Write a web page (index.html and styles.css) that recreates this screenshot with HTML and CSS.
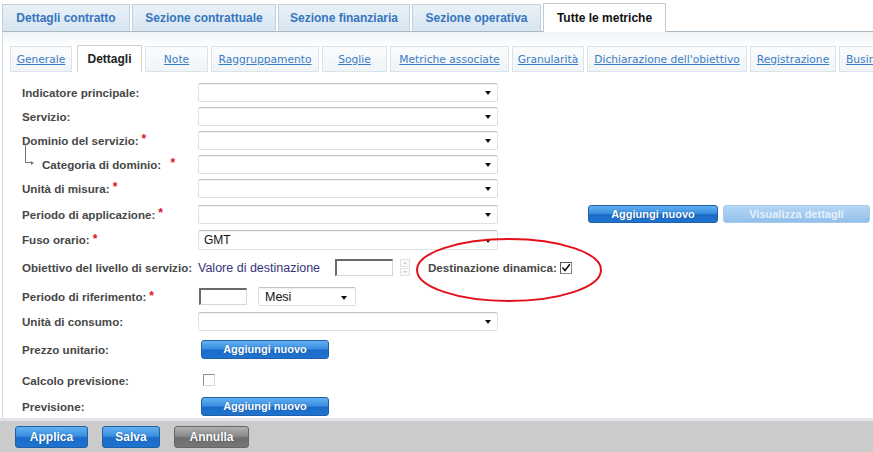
FILE: index.html
```html
<!DOCTYPE html>
<html lang="it">
<head>
<meta charset="utf-8">
<title>Tutte le metriche</title>
<link rel="stylesheet" href="styles.css">
</head>
<body>
<div class="page">
  <div class="tabs">
    <div class="tab tab-w1">Dettagli contratto</div>
    <div class="tab tab-w2">Sezione contrattuale</div>
    <div class="tab tab-w3">Sezione finanziaria</div>
    <div class="tab tab-w4">Sezione operativa</div>
    <div class="tab tab-active tab-w5">Tutte le metriche</div>
  </div>
  <div class="panel">
    <div class="subtabs">
      <a class="subtab st-gen">Generale</a>
      <span class="subtab subtab-active st-det">Dettagli</span>
      <a class="subtab st-note">Note</a>
      <a class="subtab st-rag">Raggruppamento</a>
      <a class="subtab st-sog">Soglie</a>
      <a class="subtab st-met">Metriche associate</a>
      <a class="subtab st-gra">Granularità</a>
      <a class="subtab st-dic">Dichiarazione dell'obiettivo</a>
      <a class="subtab st-reg">Registrazione</a>
      <a class="subtab st-bus">Busin</a>
    </div>
    <div class="form">
      <div class="row h24">
        <div class="label">Indicatore principale:</div>
        <div class="select"><span class="arrow"></span></div>
      </div>
      <div class="row h24">
        <div class="label">Servizio:</div>
        <div class="select"><span class="arrow"></span></div>
      </div>
      <div class="row h24">
        <div class="label">Dominio del servizio: <span class="req">*</span></div>
        <div class="select"><span class="arrow"></span></div>
      </div>
      <div class="row h24">
        <div class="label label-child"><span class="tree"></span>Categoria di dominio: &nbsp;<span class="req">*</span></div>
        <div class="select"><span class="arrow"></span></div>
      </div>
      <div class="row h24">
        <div class="label">Unità di misura: <span class="req">*</span></div>
        <div class="select"><span class="arrow"></span></div>
      </div>
      <div class="row h28">
        <div class="label">Periodo di applicazione: <span class="req">*</span></div>
        <div class="select"><span class="arrow"></span></div>
        <div class="btn btn-blue btn-add-top">Aggiungi nuovo</div>
        <div class="btn btn-disabled">Visualizza dettagli</div>
      </div>
      <div class="row h23">
        <div class="label">Fuso orario: <span class="req">*</span></div>
        <div class="select select-tall"><span class="value">GMT</span><span class="arrow"></span></div>
      </div>
      <div class="row h33">
        <div class="label">Obiettivo del livello di servizio:</div>
        <div class="target-text">Valore di destinazione</div>
        <div class="input input-target"></div>
        <div class="spinner"><span class="spin spin-up"></span><span class="spin spin-down"></span></div>
        <div class="dyn-label">Destinazione dinamica:</div>
        <div class="checkbox checked"><svg viewBox="0 0 10 10" width="10" height="10"><path d="M1.5 4.5 L4 7.5 L8.8 1.2" fill="none" stroke="#111" stroke-width="1.6"/></svg></div>
      </div>
      <div class="row h25">
        <div class="label">Periodo di riferimento: <span class="req">*</span></div>
        <div class="input input-period"></div>
        <div class="select select-small"><span class="value">Mesi</span><span class="arrow"></span></div>
      </div>
      <div class="row h24">
        <div class="label">Unità di consumo:</div>
        <div class="select"><span class="arrow"></span></div>
      </div>
      <div class="row h32">
        <div class="label">Prezzo unitario:</div>
        <div class="btn btn-blue btn-add">Aggiungi nuovo</div>
      </div>
      <div class="row h30">
        <div class="label">Calcolo previsione:</div>
        <div class="checkbox plain"></div>
      </div>
      <div class="row h22">
        <div class="label">Previsione:</div>
        <div class="btn btn-blue btn-add">Aggiungi nuovo</div>
      </div>
    </div>
  </div>
  <div class="footer">
    <div class="btn btn-blue btn-foot btn-applica">Applica</div>
    <div class="btn btn-blue btn-foot btn-salva">Salva</div>
    <div class="btn btn-gray btn-foot btn-annulla">Annulla</div>
  </div>
  <svg class="annot" width="873" height="452" viewBox="0 0 873 452">
    <ellipse cx="509" cy="270" rx="92" ry="31" fill="none" stroke="#e3101b" stroke-width="2"/>
  </svg>
</div>
</body>
</html>
```

FILE: styles.css
```css
* { box-sizing: border-box; }
html, body { margin: 0; padding: 0; background: #fff; }
.page {
  position: relative;
  width: 873px;
  height: 452px;
  overflow: hidden;
  font-family: "Liberation Sans", Arial, sans-serif;
  background: #fff;
}

/* top tabs */
.tabs {
  display: flex;
  align-items: flex-end;
  gap: 2px;
  height: 31px;
  padding-left: 2px;
  position: relative;
  z-index: 2;
}
.tab {
  height: 27px;
  display: flex;
  align-items: center;
  justify-content: center;
  font-size: 12px;
  font-weight: bold;
  color: #3675bf;
  background: linear-gradient(#e9f1f7, #d6e5f0);
  border: 1px solid #bed2e1;
  border-bottom: none;
}
.tab-active {
  height: 29px;
  margin-bottom: -1px;
  background: #fff;
  color: #111;
  border-color: #c3cbd2;
}
.tab-w1 { width: 128px; }
.tab-w2 { width: 144px; }
.tab-w3 { width: 132px; }
.tab-w4 { width: 129px; }
.tab-w5 { width: 123px; }

/* panel */
.panel {
  height: 387px;
  margin-left: 2px;
  border-top: 1px solid #aab8c4;
  border-left: 1px solid #d3dbe2;
  background: linear-gradient(#eef3f7, #fff 14px);
  overflow: hidden;
}
.subtabs {
  display: flex;
  align-items: flex-end;
  gap: 3px;
  height: 40px;
  padding-left: 7px;
  white-space: nowrap;
}
.subtab {
  flex: none;
  height: 26px;
  display: flex;
  align-items: center;
  justify-content: center;
  font-family: "DejaVu Sans", Verdana, sans-serif;
  font-size: 10.7px;
  color: #3b7cc6;
  text-decoration: underline;
  background: linear-gradient(#fbfcfd, #f0f4f7);
  border: 1px solid #dae3ea;
}
.subtab-active {
  height: 27px;
  background: #fff;
  border-color: #cfcfcf;
  border-bottom: none;
  color: #222;
  font-weight: bold;
  text-decoration: none;
  font-family: "Liberation Sans", Arial, sans-serif;
  font-size: 12px;
}
.st-gen { width: 62px; margin-right: 2px; }
.st-det { width: 65px; }
.st-note { width: 63px; }
.st-rag { width: 108px; }
.st-sog { width: 65px; }
.st-met { width: 119px; }
.st-gra { width: 72px; }
.st-dic { width: 160px; }
.st-reg { width: 86px; }
.st-bus { width: 50px; justify-content: flex-start; padding-left: 6px; }

/* form */
.form {
  padding: 8px 0 0 19px;
}
.row {
  display: flex;
  align-items: center;
}
.h22 { height: 22px; }
.h23 { height: 23px; }
.h24 { height: 24px; }
.h25 { height: 25px; }
.h28 { height: 28px; }
.h30 { height: 30px; }
.h32 { height: 32px; }
.h33 { height: 33px; }
.label {
  flex: none;
  width: 176px;
  font-size: 11.6px;
  font-weight: bold;
  color: #474747;
  white-space: nowrap;
  display: flex;
  align-items: center;
}
.req { color: #e0101e; font-size: 12px; margin-left: 3px; margin-top: -2px; }
.label-child { position: relative; padding-left: 20px; }
.tree {
  position: absolute;
  left: 3px;
  top: -14px;
  width: 6px;
  height: 19px;
  border-left: 1px solid #777;
  border-bottom: 1px solid #777;
}
.tree::after {
  content: "";
  position: absolute;
  right: -3px;
  bottom: -3px;
  border-left: 3px solid #777;
  border-top: 2.5px solid transparent;
  border-bottom: 2.5px solid transparent;
}

.select {
  position: relative;
  width: 300px;
  height: 19px;
  border: 1px solid #e0e0e0;
  border-top-color: #c2c2c2;
  border-radius: 2px;
  background: #fff;
  box-shadow: inset 0 1px 1px rgba(0,0,0,0.06);
  display: flex;
  align-items: center;
}
.select-tall { height: 20px; }
.value {
  font-size: 12px;
  color: #111;
  padding-left: 5px;
}
.arrow {
  position: absolute;
  right: 6px;
  top: 50%;
  margin-top: -1px;
  width: 0;
  height: 0;
  border-top: 4px solid #111;
  border-left: 3.5px solid transparent;
  border-right: 3.5px solid transparent;
}
.select-small {
  width: 98px;
  height: 19px;
  margin-left: 11px;
}
.select-small .value { padding-left: 6px; font-size: 12.5px; }
.select-small .arrow { right: 8px; }

.input {
  height: 17px;
  background: #fff;
  border: 1px solid #d6d6d6;
  border-top: 2px solid #6a6a6a;
  border-left: 2px solid #6a6a6a;
}
.input-target { width: 58px; }
.input-period { width: 48px; margin-left: 1px; }

.target-text {
  width: 137px;
  font-size: 12.5px;
  color: #35357a;
  white-space: nowrap;
}
.spinner {
  display: flex;
  flex-direction: column;
  gap: 1px;
  margin-left: 7px;
}
.spin {
  position: relative;
  width: 10px;
  height: 8px;
  border: 1px solid #e2e2e2;
  background: #fafafa;
}
.spin::after {
  content: "";
  position: absolute;
  left: 2px;
  top: 2px;
  border-left: 2px solid transparent;
  border-right: 2px solid transparent;
}
.spin-up::after { border-bottom: 2px solid #c9c9c9; }
.spin-down::after { border-top: 2px solid #c9c9c9; }

.dyn-label {
  margin-left: 18px;
  font-size: 11.6px;
  font-weight: bold;
  color: #474747;
  white-space: nowrap;
}
.checkbox {
  width: 12px;
  height: 12px;
  background: #fff;
  display: flex;
  align-items: center;
  justify-content: center;
}
.checkbox.checked {
  margin-left: 3px;
  border: 1px solid #8a8a8a;
  border-top-color: #555;
  border-left-color: #555;
}
.checkbox.plain {
  margin-left: 5px;
  border: 1px solid #d8d8d8;
  border-top-color: #8f8f8f;
  border-left-color: #8f8f8f;
}

/* buttons */
.btn {
  flex: none;
  display: flex;
  align-items: center;
  justify-content: center;
  font-size: 11px;
  font-weight: bold;
  color: #fff;
  border-radius: 3px;
  white-space: nowrap;
}
.btn-blue {
  background: linear-gradient(#62b0f2 0%, #3a8fe0 45%, #1a6bc8 55%, #1f74d0 100%);
  border: 1px solid #1f5fa5;
  text-shadow: 0 0 1px rgba(0,40,100,0.6);
}
.btn-gray {
  background: linear-gradient(#b0b0b0 0%, #8b8b8b 45%, #6d6d6d 55%, #777 100%);
  border: 1px solid #666;
  text-shadow: 0 0 1px rgba(0,0,0,0.5);
}
.btn-disabled {
  width: 147px;
  height: 18px;
  margin-left: 5px;
  background: linear-gradient(#b4d6f5, #92c0ea);
  border: 1px solid #a9cbe9;
  color: #e6f0fa;
}
.btn-add-top { width: 130px; height: 18px; margin-left: 90px; }
.btn-add { width: 128px; height: 19px; margin-left: 3px; }

/* footer */
.footer {
  height: 34px;
  background: #cbcbcb;
  border-top: 3px solid #e1e5e9;
  display: flex;
  align-items: center;
  padding-left: 15px;
  gap: 14px;
}
.btn-foot { height: 22px; font-size: 12px; margin-top: 1px; }
.btn-applica { width: 73px; }
.btn-salva { width: 58px; }
.btn-annulla { width: 75px; }

.annot {
  position: absolute;
  left: 0;
  top: 0;
  pointer-events: none;
}
```
